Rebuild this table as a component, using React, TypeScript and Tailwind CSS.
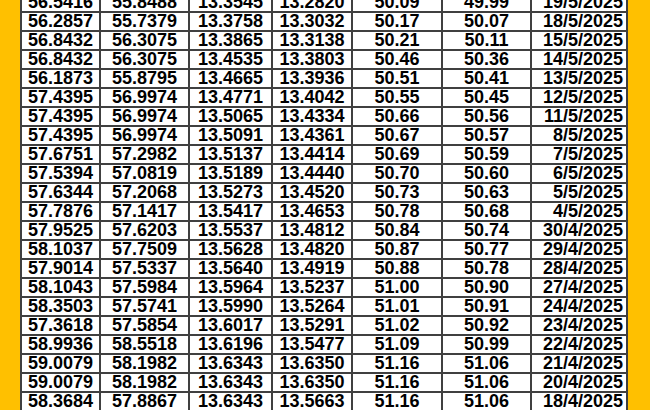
const ROWS: string[][] = [
  ["56.5416", "55.8488", "13.3545", "13.2820", "50.09", "49.99", "19/5/2025"],
  ["56.2857", "55.7379", "13.3758", "13.3032", "50.17", "50.07", "18/5/2025"],
  ["56.8432", "56.3075", "13.3865", "13.3138", "50.21", "50.11", "15/5/2025"],
  ["56.8432", "56.3075", "13.4535", "13.3803", "50.46", "50.36", "14/5/2025"],
  ["56.1873", "55.8795", "13.4665", "13.3936", "50.51", "50.41", "13/5/2025"],
  ["57.4395", "56.9974", "13.4771", "13.4042", "50.55", "50.45", "12/5/2025"],
  ["57.4395", "56.9974", "13.5065", "13.4334", "50.66", "50.56", "11/5/2025"],
  ["57.4395", "56.9974", "13.5091", "13.4361", "50.67", "50.57", "8/5/2025"],
  ["57.6751", "57.2982", "13.5137", "13.4414", "50.69", "50.59", "7/5/2025"],
  ["57.5394", "57.0819", "13.5189", "13.4440", "50.70", "50.60", "6/5/2025"],
  ["57.6344", "57.2068", "13.5273", "13.4520", "50.73", "50.63", "5/5/2025"],
  ["57.7876", "57.1417", "13.5417", "13.4653", "50.78", "50.68", "4/5/2025"],
  ["57.9525", "57.6203", "13.5537", "13.4812", "50.84", "50.74", "30/4/2025"],
  ["58.1037", "57.7509", "13.5628", "13.4820", "50.87", "50.77", "29/4/2025"],
  ["57.9014", "57.5337", "13.5640", "13.4919", "50.88", "50.78", "28/4/2025"],
  ["58.1043", "57.5984", "13.5964", "13.5237", "51.00", "50.90", "27/4/2025"],
  ["58.3503", "57.5741", "13.5990", "13.5264", "51.01", "50.91", "24/4/2025"],
  ["57.3618", "57.5854", "13.6017", "13.5291", "51.02", "50.92", "23/4/2025"],
  ["58.9936", "58.5518", "13.6196", "13.5477", "51.09", "50.99", "22/4/2025"],
  ["59.0079", "58.1982", "13.6343", "13.6350", "51.16", "51.06", "21/4/2025"],
  ["59.0079", "58.1982", "13.6343", "13.6350", "51.16", "51.06", "20/4/2025"],
  ["58.3684", "57.8867", "13.6343", "13.5663", "51.16", "51.06", "18/4/2025"],
];

export default function App() {
  return (
    <div className="w-[650px] h-[410px] overflow-hidden bg-[#FFC000] pl-[20px]">
      {/* rate table, top row is cut off by the frame */}
      <div
        className="-mt-[8px] w-[608px] grid grid-cols-[77px_87px_81px_78px_88px_87px_94px] gap-[2px] p-[2px] bg-[#404040] text-black font-bold text-[18px] leading-[17px]"
        style={{ fontFamily: '"Liberation Sans", Arial, sans-serif' }}
      >
        {ROWS.map((row, r) =>
          row.map((cell, c) => (
            <div
              key={`${r}-${c}`}
              className={`h-[17px] bg-white whitespace-nowrap ${
                c === 6 ? "text-right pr-[3px]" : "text-center"
              }`}
            >
              {cell}
            </div>
          ))
        )}
      </div>
    </div>
  );
}
